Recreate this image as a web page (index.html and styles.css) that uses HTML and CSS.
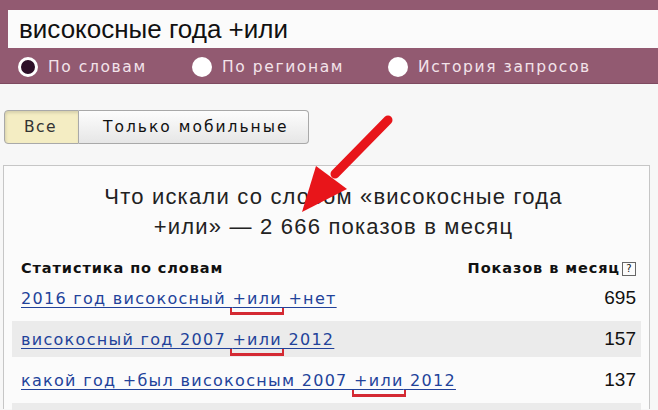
FILE: index.html
```html
<!DOCTYPE html>
<html lang="ru">
<head>
    <meta charset="UTF-8">
    <title>Статистика по словам</title>
    <link rel="stylesheet" href="styles.css">
</head>
<body>
<div class="head">
    <div class="searchBox">високосные года +или</div>
    <div class="modes">
        <label class="mode"><span class="radio checked"></span>По словам</label>
        <label class="mode mode2"><span class="radio"></span>По регионам</label>
        <label class="mode mode3"><span class="radio"></span>История запросов</label>
    </div>
</div>
<div class="tabs">
    <span class="tab active">Все</span>
    <span class="tab">Только мобильные</span>
</div>
<div class="panel">
    <div class="panelTitle">Что искали со словом «високосные года<br>+или» — 2 666 показов в месяц</div>
    <div class="statHead">
        <span>Статистика по словам</span>
        <span>Показов в месяц<i class="help">?</i></span>
    </div>
    <div class="row first">
        <a href="#">2016 год високосный <span class="mark">+или</span> +нет</a>
        <span class="num">695</span>
    </div>
    <div class="row odd">
        <a href="#">високосный год 2007 <span class="mark">+или</span> 2012</a>
        <span class="num">157</span>
    </div>
    <div class="row">
        <a href="#">какой год +был високосным 2007 <span class="mark">+или</span> 2012</a>
        <span class="num">137</span>
    </div>
    <div class="row odd"></div>
</div>
<svg class="arrow" width="120" height="120" viewBox="0 0 120 120">
    <line x1="103" y1="12" x2="50" y2="66" stroke="#e8151a" stroke-width="9" stroke-linecap="round"/>
    <polygon points="17,104 31,58 62,81" fill="#e8151a"/>
</svg>
</body>
</html>
```

FILE: styles.css
```css
body {
    margin: 0;
    background: #f7f7f7;
    font-family: "Liberation Sans", Arial, sans-serif;
    color: #222;
    position: relative;
    width: 658px;
    height: 410px;
    overflow: hidden;
}

.head {
    background: #925a71;
    padding: 10px 0 0 8px;
    border-bottom: 1px solid #7e4a60;
}

.searchBox {
    background: #fbfbfb;
    height: 38px;
    line-height: 38px;
    padding-left: 11px;
    font-size: 26px;
    color: #111;
}

.modes {
    display: flex;
    align-items: center;
    height: 32px;
    padding: 3px 0 0 10px;
    white-space: nowrap;
}

.mode {
    display: flex;
    align-items: center;
    font-family: "DejaVu Sans", Verdana, sans-serif;
    font-size: 15.5px;
    letter-spacing: 1.6px;
    color: #f3e3ea;
    width: 174px;
}
.mode2 {
    width: 196px;
}
.mode3 {
    width: auto;
}

.radio {
    flex: none;
    width: 20px;
    height: 20px;
    border-radius: 50%;
    background: #fff;
    margin-right: 10px;
    box-sizing: border-box;
}
.radio.checked {
    border: 3px solid #fff;
    background: #2d1028;
}

.tabs {
    display: flex;
    margin: 26px 0 0 4px;
    height: 34px;
}

.tab {
    display: flex;
    align-items: center;
    width: 205px;
    padding: 0 0 0 24px;
    font-family: "DejaVu Sans", Verdana, sans-serif;
    font-size: 15.5px;
    letter-spacing: 2px;
    white-space: nowrap;
    color: #111;
    border: 1px solid #a9a9a9;
    border-left: none;
    border-radius: 0 4px 4px 0;
    background: linear-gradient(#fdfdfd, #e6e6e6);
}
.tab.active {
    width: 54px;
    padding: 0 0 0 19px;
    letter-spacing: 1.4px;
    border-left: 1px solid #a9a9a9;
    border-radius: 4px 0 0 4px;
    background: #f4edc3;
    color: #333;
    box-shadow: inset 1px 2px 3px rgba(0,0,0,0.12);
}

.panel {
    margin: 21px 8px 0 3px;
    border: 1px solid #c6c6c6;
    border-bottom: none;
    background: #fbfbfb;
    padding: 0 8px 0 8px;
    height: 243px;
}

.panelTitle {
    text-align: center;
    font-size: 22px;
    letter-spacing: 1.2px;
    line-height: 30px;
    padding: 16px 0 0 14px;
    color: #222;
}

.statHead {
    display: flex;
    justify-content: space-between;
    font-family: "DejaVu Sans", Verdana, sans-serif;
    font-size: 14.5px;
    letter-spacing: 0.9px;
    font-weight: bold;
    color: #111;
    margin-top: 16px;
    padding: 0 5px 0 9px;
    height: 20px;
    align-items: center;
}

.help {
    display: inline-block;
    width: 12px;
    height: 12px;
    line-height: 12px;
    border: 1px solid #666;
    font-size: 10px;
    letter-spacing: 0;
    font-style: normal;
    font-weight: normal;
    text-align: center;
    margin-left: 2px;
    vertical-align: 1px;
}

.row {
    display: flex;
    justify-content: space-between;
    align-items: center;
    height: 36px;
    margin-top: 5px;
    padding: 0 5px 0 9px;
}
.row.first {
    margin-top: 2px;
}
.row.odd {
    background: #ebebeb;
}

.row a {
    font-family: "DejaVu Sans", Verdana, sans-serif;
    font-size: 16px;
    letter-spacing: 1.3px;
    white-space: nowrap;
    color: #22429a;
    text-decoration: underline;
    text-underline-offset: 3px;
}

.mark {
    position: relative;
}
.mark::after {
    content: "";
    position: absolute;
    left: -2px;
    right: -2px;
    bottom: -7px;
    height: 4px;
    border: 2px solid #d42a33;
    border-top: none;
    border-bottom-width: 3px;
}

.num {
    font-size: 19px;
    color: #111;
}

.arrow {
    position: absolute;
    left: 285px;
    top: 108px;
}
```
